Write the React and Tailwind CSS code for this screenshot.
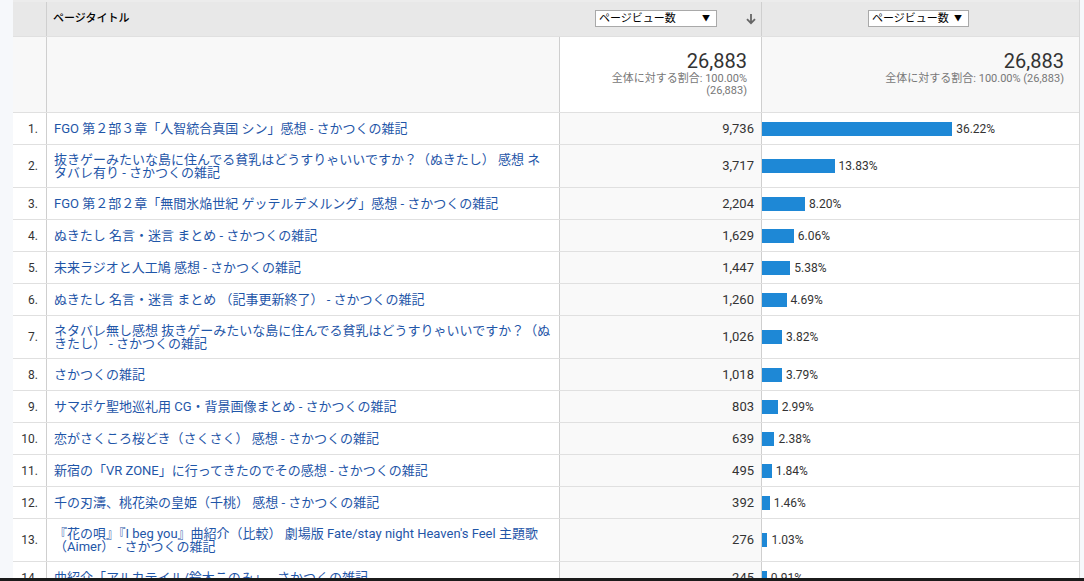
import React from 'react';

const rows = [
    { lines: ['FGO 第２部３章「人智統合真国 シン」感想 - さかつくの雑記'], views: '9,736', pct: 36.22 },
    { lines: ['抜きゲーみたいな島に住んでる貧乳はどうすりゃいいですか？（ぬきたし） 感想 ネ', 'タバレ有り - さかつくの雑記'], views: '3,717', pct: 13.83 },
    { lines: ['FGO 第２部２章「無間氷焔世紀 ゲッテルデメルング」感想 - さかつくの雑記'], views: '2,204', pct: 8.2 },
    { lines: ['ぬきたし 名言・迷言 まとめ - さかつくの雑記'], views: '1,629', pct: 6.06 },
    { lines: ['未来ラジオと人工鳩 感想 - さかつくの雑記'], views: '1,447', pct: 5.38 },
    { lines: ['ぬきたし 名言・迷言 まとめ （記事更新終了） - さかつくの雑記'], views: '1,260', pct: 4.69 },
    { lines: ['ネタバレ無し感想 抜きゲーみたいな島に住んでる貧乳はどうすりゃいいですか？（ぬ', 'きたし） - さかつくの雑記'], views: '1,026', pct: 3.82 },
    { lines: ['さかつくの雑記'], views: '1,018', pct: 3.79 },
    { lines: ['サマポケ聖地巡礼用 CG・背景画像まとめ - さかつくの雑記'], views: '803', pct: 2.99 },
    { lines: ['恋がさくころ桜どき（さくさく） 感想 - さかつくの雑記'], views: '639', pct: 2.38 },
    { lines: ['新宿の「VR ZONE」に行ってきたのでその感想 - さかつくの雑記'], views: '495', pct: 1.84 },
    { lines: ['千の刃濤、桃花染の皇姫（千桃） 感想 - さかつくの雑記'], views: '392', pct: 1.46 },
    { lines: ['『花の唄』『I beg you』曲紹介（比較） 劇場版 Fate/stay night Heaven\'s Feel 主題歌', '（Aimer） - さかつくの雑記'], views: '276', pct: 1.03 },
    { lines: ['曲紹介「アルカテイル/鈴木このみ」 - さかつくの雑記'], views: '245', pct: 0.91 },
];

function Select({ width }) {
    return (
        <div className={`${width} h-[17px] bg-white border border-[#a9a9a9] flex items-center justify-between pl-[3px] pr-[6px] text-[11px] text-black leading-none`}>
            <span>ページビュー数</span>
            <span className="text-[8px]">▼</span>
        </div>
    );
}

export default function App() {
    return (
        <div className="w-[1084px] h-[581px] flex flex-col overflow-hidden bg-[#f6f8fa] font-[Roboto,'Noto_Sans_CJK_JP',sans-serif]">
            <div className="flex-1 flex overflow-hidden">
                {/* left gutter */}
                <div className="w-[13px] bg-[#f6f8fb]" />

                {/* table */}
                <div className="w-[1066px] flex flex-col bg-white border-t-2 border-[#ececec]">
                    {/* header */}
                    <div className="grid grid-cols-[34px_513px_202px_317px] h-[35px] shrink-0 bg-[#e8e8e8] border-b border-[#e0e0e0]">
                        <div className="border-r border-[#cfcfcf]" />
                        <div className="border-r border-[#e8e8e8] flex items-center pl-[6px] pt-[1px] text-[11px] font-medium text-black">ページタイトル</div>
                        <div className="border-r border-[#cfcfcf] flex items-center pl-[35px] pr-[4px] pb-[1px]">
                            <Select width="w-[122px]" />
                            <div className="flex-1 flex justify-end text-[#666]">
                                <svg width="12" height="12" viewBox="0 0 12 12">
                                    <path d="M6 1v9M2 6.2l4 4 4-4" fill="none" stroke="#666" strokeWidth="1.8" />
                                </svg>
                            </div>
                        </div>
                        <div className="flex items-center pl-[106px] pb-[1px]">
                            <Select width="w-[101px]" />
                        </div>
                    </div>

                    {/* totals */}
                    <div className="grid grid-cols-[34px_513px_202px_317px] h-[76px] shrink-0 bg-[#f8f8f8] border-b border-[#e0e0e0]">
                        <div className="border-r border-[#cfcfcf]" />
                        <div className="border-r border-[#cfcfcf]" />
                        <div className="border-r border-[#cfcfcf] bg-white flex flex-col items-end pr-[14px] pt-[13px]">
                            <div className="text-[20px] leading-[22px] text-[#333]">26,883</div>
                            <div className="text-[11px] leading-[12px] text-[#777] text-right mt-[1px]">全体に対する割合: 100.00%<br />(26,883)</div>
                        </div>
                        <div className="flex flex-col items-end pr-[15px] pt-[13px]">
                            <div className="text-[20px] leading-[22px] text-[#333]">26,883</div>
                            <div className="text-[11px] leading-[12px] text-[#777] mt-[1px]">全体に対する割合: 100.00% (26,883)</div>
                        </div>
                    </div>

                    {/* rows */}
                    {rows.map((row, i) => (
                        <div
                            key={i}
                            className={`grid grid-cols-[34px_513px_202px_317px] shrink-0 border-b border-[#e0e0e0] ${row.lines.length > 1 ? 'h-[43px]' : 'h-[32px]'}`}
                        >
                            <div className="border-r border-[#cfcfcf] flex items-center justify-end pr-[8px] text-[12px] text-[#333]">{i + 1}.</div>
                            <div className="border-r border-[#cfcfcf] flex flex-col justify-center pl-[7px] text-[13px] leading-[13px] text-[#1f56a8]">
                                {row.lines.map((line, j) => (
                                    <div key={j} className="whitespace-nowrap">{line}</div>
                                ))}
                            </div>
                            <div className="border-r border-[#cfcfcf] bg-[#f9f9f9] flex items-center justify-end pr-[7px] text-[13px] text-[#333]">{row.views}</div>
                            <div className="flex items-center gap-[4px] text-[12px] text-[#333]">
                                <div className="h-[14px] bg-[#1e88d6]" style={{ width: `${row.pct * 5.25}px` }} />
                                <span>{row.pct.toFixed(2)}%</span>
                            </div>
                        </div>
                    ))}
                </div>

                {/* right gutter */}
                <div className="w-[5px] border-l border-[#d8d8d8] bg-[#f6f8fb]" />
            </div>
            <div className="h-[3px] shrink-0 bg-[#1b1b1b]" />
        </div>
    );
}
